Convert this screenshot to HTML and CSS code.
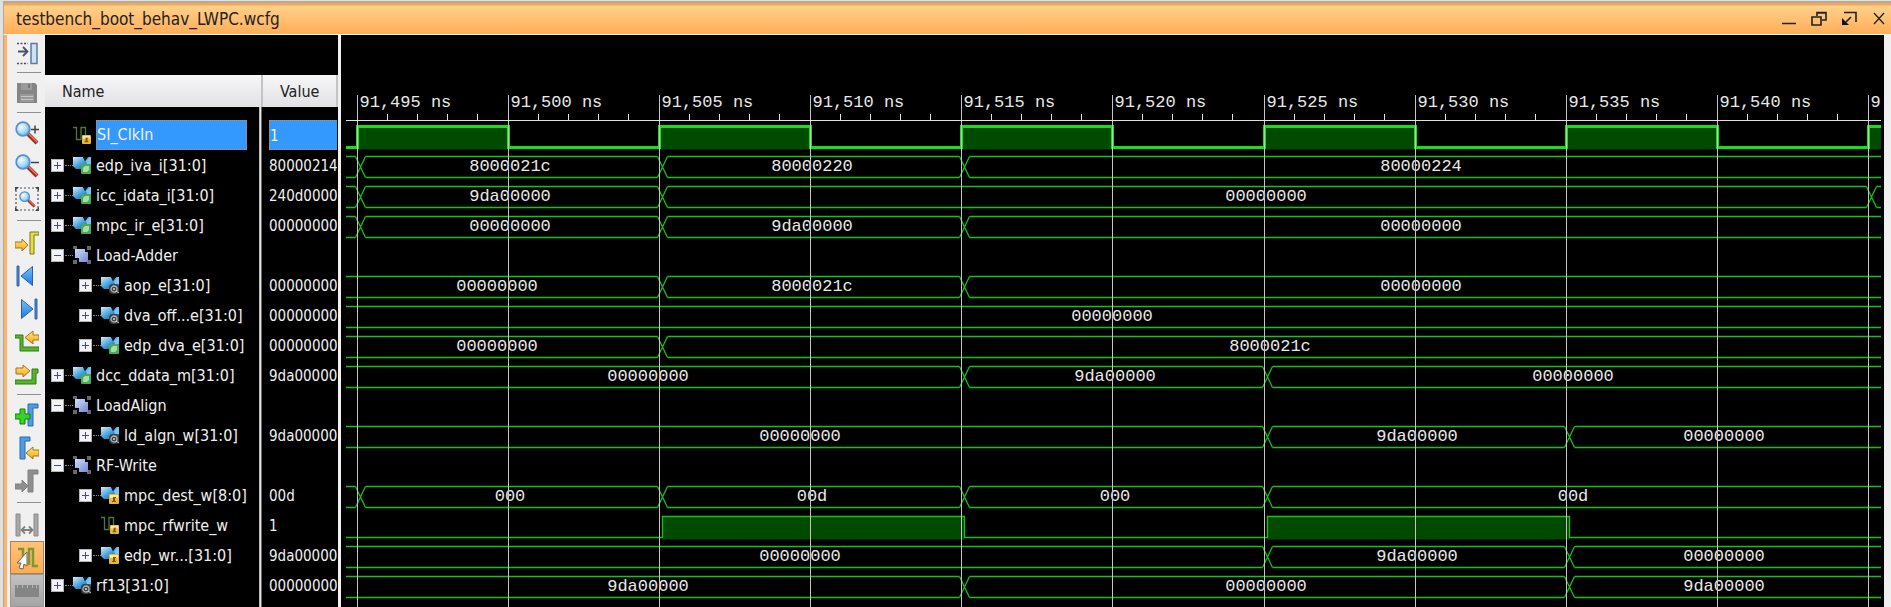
FILE: index.html
```html
<!DOCTYPE html>
<html lang="en">
<head>
<meta charset="utf-8">
<title>testbench_boot_behav_LWPC.wcfg</title>
<link rel="stylesheet" href="styles.css">
</head>
<body>
<svg class="defs" aria-hidden="true">
  <defs>
    <linearGradient id="g-blue" x1="0" y1="0" x2="1" y2="1"><stop offset="0" stop-color="#d4efff"/><stop offset=".5" stop-color="#3fa0dc"/><stop offset="1" stop-color="#17517f"/></linearGradient>
    <linearGradient id="g-play" x1="0" y1="0" x2="0" y2="1"><stop offset="0" stop-color="#7cc0f8"/><stop offset="1" stop-color="#1a7ae0"/></linearGradient>
    <linearGradient id="g-gold" x1="0" y1="0" x2="0" y2="1"><stop offset="0" stop-color="#ffe680"/><stop offset="1" stop-color="#f0a818"/></linearGradient>
    <linearGradient id="g-group" x1="0" y1="0" x2="1" y2="1"><stop offset="0" stop-color="#d3dcfb"/><stop offset="1" stop-color="#7389d0"/></linearGradient>
    <radialGradient id="g-lens" cx=".35" cy=".35" r=".7"><stop offset="0" stop-color="#f4fcff"/><stop offset=".6" stop-color="#a6dcfa"/><stop offset="1" stop-color="#5db2ee"/></radialGradient>
    <symbol id="bus" viewBox="0 0 18 18"><path d="M0 1h10l2 4 3-4h3v10l-3 2H3L0 10z" fill="url(#g-blue)"/><path d="M10 1l2 4 3-4z" fill="#0a1420"/><path d="M13 5l4-4h1v7h-4z" fill="#7cc4ee"/></symbol>
    <symbol id="b-port" viewBox="0 0 10 10"><rect x="0" y="0" width="10" height="10" rx="1" fill="#4ea858"/><path d="M2 8V4l2-2h4v4L6 8z" fill="#a4e0a0"/></symbol>
    <symbol id="b-reg" viewBox="0 0 10 10"><rect width="10" height="10" rx="4" fill="#3c3c3c"/><circle cx="5" cy="5" r="3" fill="none" stroke="#b4b4b4" stroke-width="1.3"/><circle cx="5" cy="5" r="1" fill="#e0e0e0"/><path d="M7 7l3 2" stroke="#ccc"/></symbol>
    <symbol id="b-lock" viewBox="0 0 10 10"><rect width="10" height="10" rx="1" fill="#e8b83c"/><path d="M1 1h8v3H1z" fill="#ffe9a0"/><path d="M4 3h3v1H6v3h1v1H3V7h1z" fill="#7a5200"/></symbol>
    <symbol id="i-port" viewBox="0 0 18 18"><use href="#bus" width="18" height="18"/><use href="#b-port" x="8" y="8" width="10" height="10"/></symbol>
    <symbol id="i-reg" viewBox="0 0 18 18"><use href="#bus" width="18" height="18"/><use href="#b-reg" x="8" y="8" width="10" height="10"/></symbol>
    <symbol id="i-lock" viewBox="0 0 18 18"><use href="#bus" width="18" height="18"/><use href="#b-lock" x="8" y="8" width="10" height="10"/></symbol>
    <symbol id="i-bit" viewBox="0 0 18 18"><path d="M0 1.500h3.500v12H8v-12h4.500V10" fill="none" stroke="#4c7a3c" stroke-width="1.300"/><use href="#b-lock" x="9" y="9" width="9" height="9"/></symbol>
    <symbol id="i-group" viewBox="0 0 18 18"><path d="M0 0h4v3H0zM14 0h4v4h-4zM0 14h4v4H0zM14 14h4v4h-4z" fill="#686868"/><path d="M2 3h10v3h3v10H6v-4H2z" fill="url(#g-group)"/><path d="M6.500 12V6.500H12" fill="none" stroke="#b4c2f0"/></symbol>
    <symbol id="lens" viewBox="0 0 24 24"><path d="M13 13l9 9" stroke="#a82a1c" stroke-width="4"/><path d="M14 13l8 8" stroke="#ea7a60" stroke-width="1.500"/><circle cx="8" cy="8" r="6.800" fill="url(#g-lens)" stroke="#5a8fd0" stroke-width="1.800"/></symbol>
  </defs>
</svg>

<main class="window">
  <header class="titlebar">
    <h1 class="title">testbench_boot_behav_LWPC.wcfg</h1>
    <div class="controls">
      <button type="button" aria-label="Minimize"><svg viewBox="0 0 16 16"><path d="M1 12.500h14" stroke-width="1.500"/></svg></button>
      <button type="button" aria-label="Restore"><svg viewBox="0 0 16 16"><path d="M6 5V1.500h9V9h-4M1 6h9v8H1zM6 2h9"/></svg></button>
      <button type="button" aria-label="Float"><svg viewBox="0 0 16 16"><path d="M3 1.500h12V11M10 6l-5 5"/><path d="M1 7v7h7z" class="solid"/></svg></button>
      <button type="button" aria-label="Close"><svg viewBox="0 0 16 16"><path d="M3 2l10 11M13 2L3 13" stroke-width="1.300"/></svg></button>
    </div>
  </header>

  <div class="body">
    <nav class="toolbar" aria-label="Waveform tools">
      <button type="button" aria-label="Hide panel"><svg viewBox="0 0 24 24"><path d="M2 2.500h11M2 22.500h11" stroke="#444e60" stroke-width="1.500" stroke-dasharray="2 1.500"/><path d="M3 10.500h9M8 6l4.500 4.500L8 15" fill="none" stroke="#4a5268" stroke-width="1.800"/><path d="M16 2.500h6v20h-6z" fill="#cfe2f4" stroke="#5f7ba4" stroke-width="1.500"/></svg></button>
      <hr>
      <button type="button" aria-label="Save"><svg viewBox="0 0 24 24"><path d="M2 2h18l2 2v18H2z" fill="#858585"/><path d="M6 2h11v7H6z" fill="#9b9b9b"/><path d="M13 3h2v4h-2z" fill="#777"/><path d="M5 13h14v8H5z" fill="#999"/><path d="M6 15.500h12M6 18.500h12" stroke="#c4c4c4"/></svg></button>
      <hr>
      <button type="button" aria-label="Zoom in"><svg viewBox="0 0 24 24"><use href="#lens" width="24" height="24"/><path d="M16 8.500h8M20 4.500v8" stroke="#444" stroke-width="1.500"/></svg></button>
      <button type="button" aria-label="Zoom out"><svg viewBox="0 0 24 24"><use href="#lens" width="24" height="24"/><path d="M16 8.500h8" stroke="#444" stroke-width="1.500"/></svg></button>
      <button type="button" aria-label="Zoom fit"><svg viewBox="0 0 24 24"><path d="M1 1h22v22H1z" fill="none" stroke="#555" stroke-width="1.200" stroke-dasharray="2 2"/><path d="M0 0h4L0 4zM24 0v4l-4-4zM0 24v-4l4 4zM24 24h-4l4-4z" fill="#444"/><use href="#lens" x="4" y="4" width="17" height="17"/></svg></button>
      <hr class="wide">
      <button type="button" aria-label="Go to cursor"><svg viewBox="0 0 24 24"><path d="M15 23V1h9v3h-5v19z" fill="#e4e040" stroke="#77741c"/><path d="M0 11h7V8l6 6-6 6v-3H0z" fill="url(#g-gold)" stroke="#a87414"/></svg></button>
      <button type="button" aria-label="Go to start"><svg viewBox="0 0 24 24"><path d="M2 2h2v20H2z" fill="#4a84c8" stroke="#3266aa"/><path d="M17.500 2.500v19L6 12z" fill="url(#g-play)" stroke="#2860ac"/></svg></button>
      <button type="button" aria-label="Go to end"><svg viewBox="0 0 24 24"><path d="M20 2h2v20h-2z" fill="#4a84c8" stroke="#3266aa"/><path d="M6.500 2.500v19L18 12z" fill="url(#g-play)" stroke="#2860ac"/></svg></button>
      <button type="button" aria-label="Previous transition"><svg viewBox="0 0 24 24"><path d="M0 5h8v12h16v4H5V8H0z" fill="#58b42c" stroke="#2f7d14"/><path d="M24 5h-6V1l-8 6.500 8 6.500v-4h6z" fill="url(#g-gold)" stroke="#a87414"/></svg></button>
      <button type="button" aria-label="Next transition"><svg viewBox="0 0 24 24"><path d="M0 17h17V6h6v4h-2v11H0z" fill="#58b42c" stroke="#2f7d14"/><path d="M1 5h7V2l7 6-7 6v-3H1z" fill="url(#g-gold)" stroke="#a87414"/></svg></button>
      <hr>
      <button type="button" aria-label="Add marker"><svg viewBox="0 0 24 24"><path d="M13 23V1h10v4h-5v18z" fill="#4c9ce8" stroke="#2c68ac"/><path d="M0 11h5V6h5v5h5v5h-5v5H5v-5H0z" fill="#35d427" stroke="#12800c"/></svg></button>
      <button type="button" aria-label="Previous marker"><svg viewBox="0 0 24 24"><path d="M5 23V1h10v4h-5v18z" fill="#4c9ce8" stroke="#2c68ac"/><path d="M24 14h-6v-3l-7 6 7 6v-3h6z" fill="url(#g-gold)" stroke="#a87414"/></svg></button>
      <button type="button" aria-label="Next marker"><svg viewBox="0 0 24 24"><path d="M13 23V1h10v4h-5v18zM0 15h7v-4l6 6-6 6v-3H0z" fill="#8e8e8e" stroke="#808080"/></svg></button>
      <hr class="wide">
      <button type="button" aria-label="Swap cursors"><svg viewBox="0 0 24 24"><path d="M1 1h4v22H1zM19 1h4v22h-4z" fill="#a8a8a8" stroke="#8a8a8a"/><path d="M7 17h10M10 13.500L6.500 17l3.500 3.500M14 13.500l3.500 3.500-3.500 3.500" fill="none" stroke="#808080" stroke-width="1.800"/></svg></button>
      <button type="button" class="active" aria-pressed="true" aria-label="Snap to transition"><svg viewBox="0 0 24 24"><path d="M3 3h5v17M14 19V3h4v17h5" fill="none" stroke="#7d9830" stroke-width="2.500"/><path d="M12 6v14l-3-2-1 5-4-1 2-5H2z" fill="#fff" stroke="#666"/></svg></button>
      <button type="button" class="muted" aria-label="Floating ruler"><svg viewBox="0 0 24 24"><path d="M0 6h24v12H0z" fill="#858585"/><path d="M2.500 6v3M7.500 6v3M12.500 6v3M17.500 6v3M21.500 6v3" stroke="#b4b4b4"/></svg></button>
    </nav>

    <section class="signals">
      <div class="sheet">
        <table>
          <colgroup><col class="c-name"><col class="c-value"></colgroup>
          <thead><tr><th scope="col">Name</th><th scope="col">Value</th></tr></thead>
          <tbody>
            <tr class="selected"><td><div class="node leaf"><svg><use href="#i-bit"/></svg><span>SI_ClkIn</span></div></td><td><div class="val">1</div></td></tr>
            <tr><td><div class="node"><button type="button" class="exp" aria-label="Expand"></button><svg><use href="#i-port"/></svg><span>edp_iva_i[31:0]</span></div></td><td><div class="val">80000214</div></td></tr>
            <tr><td><div class="node"><button type="button" class="exp" aria-label="Expand"></button><svg><use href="#i-port"/></svg><span>icc_idata_i[31:0]</span></div></td><td><div class="val">240d0000</div></td></tr>
            <tr><td><div class="node"><button type="button" class="exp" aria-label="Expand"></button><svg><use href="#i-port"/></svg><span>mpc_ir_e[31:0]</span></div></td><td><div class="val">00000000</div></td></tr>
            <tr><td><div class="node"><button type="button" class="exp open" aria-label="Collapse"></button><svg><use href="#i-group"/></svg><span>Load-Adder</span></div></td><td></td></tr>
            <tr><td><div class="node child"><button type="button" class="exp" aria-label="Expand"></button><svg><use href="#i-reg"/></svg><span>aop_e[31:0]</span></div></td><td><div class="val">00000000</div></td></tr>
            <tr><td><div class="node child"><button type="button" class="exp" aria-label="Expand"></button><svg><use href="#i-reg"/></svg><span>dva_off...e[31:0]</span></div></td><td><div class="val">00000000</div></td></tr>
            <tr><td><div class="node child"><button type="button" class="exp" aria-label="Expand"></button><svg><use href="#i-port"/></svg><span>edp_dva_e[31:0]</span></div></td><td><div class="val">00000000</div></td></tr>
            <tr><td><div class="node"><button type="button" class="exp" aria-label="Expand"></button><svg><use href="#i-port"/></svg><span>dcc_ddata_m[31:0]</span></div></td><td><div class="val">9da00000</div></td></tr>
            <tr><td><div class="node"><button type="button" class="exp open" aria-label="Collapse"></button><svg><use href="#i-group"/></svg><span>LoadAlign</span></div></td><td></td></tr>
            <tr><td><div class="node child"><button type="button" class="exp" aria-label="Expand"></button><svg><use href="#i-reg"/></svg><span>ld_algn_w[31:0]</span></div></td><td><div class="val">9da00000</div></td></tr>
            <tr><td><div class="node"><button type="button" class="exp open" aria-label="Collapse"></button><svg><use href="#i-group"/></svg><span>RF-Write</span></div></td><td></td></tr>
            <tr><td><div class="node child"><button type="button" class="exp" aria-label="Expand"></button><svg><use href="#i-lock"/></svg><span>mpc_dest_w[8:0]</span></div></td><td><div class="val">00d</div></td></tr>
            <tr><td><div class="node child leaf"><svg><use href="#i-bit"/></svg><span>mpc_rfwrite_w</span></div></td><td><div class="val">1</div></td></tr>
            <tr><td><div class="node child"><button type="button" class="exp" aria-label="Expand"></button><svg><use href="#i-lock"/></svg><span>edp_wr...[31:0]</span></div></td><td><div class="val">9da00000</div></td></tr>
            <tr><td><div class="node"><button type="button" class="exp" aria-label="Expand"></button><svg><use href="#i-reg"/></svg><span>rf13[31:0]</span></div></td><td><div class="val">00000000</div></td></tr>
          </tbody>
        </table>
      </div>
    </section>

    <section class="waves" aria-label="Waveforms"><svg id="plot"></svg></section>
    <div class="gutter"></div>
  </div>
</main>
<script src="waves.js"></script>
</body>
</html>
```

FILE: styles.css
```css
* { box-sizing: border-box; }

body {
  margin: 0;
  height: 100vh;
  overflow: hidden;
  background: #e0e0e0;
  font-family: "DejaVu Sans Condensed", "Noto Sans", sans-serif;
  font-size: 16px;
  color: #222;
}

button {
  padding: 0;
  border: 0;
  background: none;
  display: grid;
  place-items: center;
}

.defs { position: absolute; width: 0; height: 0; }

.window {
  height: 100%;
  display: flex;
  flex-direction: column;
  padding: 1px 0 0 3px;
}

.titlebar {
  display: flex;
  justify-content: space-between;
  align-items: center;
  flex: none;
  height: 34px;
  padding-left: 12px;
  border-top: 2px solid #b0aaa2;
  border-left: 1px solid #b0aaa2;
  border-bottom: 1px solid #fff4e4;
  background: linear-gradient(#f4a850 0 2px, #ffd08a 3px, #ffae58);
}

.title { margin: 0; font-size: 17px; font-weight: normal; }

.controls { display: flex; gap: 6px; }
.controls button { width: 24px; height: 24px; }
.controls svg { width: 16px; height: 16px; fill: none; stroke: #222; stroke-width: 1.6; }
.controls .solid { fill: #111; stroke: none; }

.body { flex: 1; min-height: 0; display: flex; border-left: 1px solid #b0aaa2; }

.toolbar {
  flex: none;
  width: 41px;
  display: flex;
  flex-direction: column;
  padding: 1px 1px 0 3px;
  border-left: 3px solid #fdb568;
  background: #f0f0f0;
}
.toolbar button { flex: none; width: 34px; height: 33px; }
.toolbar button svg { width: 24px; height: 24px; }
.toolbar hr {
  flex: none;
  width: 24px;
  height: 1px;
  margin: 3px 0 3px 7px;
  border: 0;
  background: #909090;
}
.toolbar hr.wide { margin-top: 5px; margin-bottom: 5px; }
.toolbar .active { border: 1px solid #a08460; background: linear-gradient(#ffc27a, #ffac50); }
.toolbar .muted { border: 1px solid #999; background: linear-gradient(#c2c2c2, #a4a4a4); }

.signals {
  flex: none;
  width: 293px;
  padding-top: 40px;
  overflow: hidden;
  background: #000;
}
.sheet {
  height: 100%;
  background: linear-gradient(90deg, #000 214px, #8a8a8a 214px, #e8e8e8 215px, #e8e8e8 216px, #666 216px, #666 217px, #000 217px);
}
table { width: 100%; table-layout: fixed; border-collapse: collapse; }
.c-name { width: 217px; }
th {
  height: 32px;
  padding: 0 0 0 17px;
  border-right: 2px solid #c4c4c8;
  background: linear-gradient(#f6f6f7, #e2e2e6);
  font-weight: normal;
  text-align: left;
}
tbody::before { content: ""; display: block; height: 13px; }
td { height: 30px; padding: 0; overflow: hidden; color: #f0f0f0; white-space: nowrap; }

.node { display: flex; align-items: center; height: 30px; padding-left: 6px; }
.node.child { padding-left: 34px; }
.node.leaf::before { content: ""; width: 22px; }
.node svg { flex: none; width: 18px; height: 18px; }
.node span { margin-left: 5px; }

.exp {
  flex: none;
  width: 13px;
  height: 13px;
  margin-right: 9px;
  border: 1px solid #b4b4b4;
  background:
    linear-gradient(#3c4c9c, #3c4c9c) center / 7px 1px no-repeat,
    linear-gradient(#3c4c9c, #3c4c9c) center / 1px 7px no-repeat,
    #f4f4f4;
  position: relative;
}
.exp.open { background: linear-gradient(#3c4c9c, #3c4c9c) center / 7px 1px no-repeat, #f4f4f4; }
.exp::after {
  content: "";
  position: absolute;
  left: 13px;
  top: 5px;
  width: 8px;
  border-top: 1px dotted #888;
}

.val { height: 30px; margin-left: 7px; font-size: 15px; line-height: 32px; }
.selected .node span {
  flex: 1;
  height: 30px;
  margin-right: 15px;
  border: 1px dotted #c98a4a;
  background: #3399ff;
  line-height: 28px;
}
.selected .val { border: 1px dotted #c98a4a; border-right: 0; background: #3399ff; line-height: 30px; }

.waves {
  flex: 1;
  min-width: 0;
  padding-left: 5px;
  padding-right: 3px;
  border-left: 3px solid #f0f0f0;
  background: #000;
}
#plot { display: block; width: 100%; height: 100%; overflow: visible; }
#plot text { font-family: "Liberation Mono", monospace; font-size: 17px; fill: #e8e8e8; }
#plot .centered { text-anchor: middle; }
.grid { stroke: #c4c4c4; stroke-width: 1; }
.axis { stroke: #e0e0e0; stroke-width: 1; }
.trace { fill: none; stroke: #18c018; stroke-width: 1.3; }
.clock { fill: none; stroke: #18e018; stroke-width: 3; }
.high { fill: #004b00; }

.gutter { flex: none; width: 7px; background: #f0f0f0; }
```

FILE: waves.js
```js
const START = 91495;
const LEAD = 11;
const VIEW = 1534;
const STEP = 151.1;
const ROW = 30;
const TOP = 86;
const END = 11;

/* Each bus is a list of [division where the value begins, value]; -1 lies left of the view. */
const rows = [
  { clock: true },
  { bus: [[-1, ""], [0, "8000021c"], [2, "80000220"], [4, "80000224"]] },
  { bus: [[-1, ""], [0, "9da00000"], [2, "00000000"], [10, ""]] },
  { bus: [[-1, ""], [0, "00000000"], [2, "9da00000"], [4, "00000000"]] },
  {},
  { bus: [[-1, "00000000"], [2, "8000021c"], [4, "00000000"]] },
  { bus: [[-1, "00000000"]] },
  { bus: [[-1, "00000000"], [2, "8000021c"]] },
  { bus: [[-1, "00000000"], [4, "9da00000"], [6, "00000000"]] },
  {},
  { bus: [[-1, "00000000"], [6, "9da00000"], [8, "00000000"]] },
  {},
  { bus: [[-1, ""], [0, "000"], [2, "00d"], [4, "000"], [6, "00d"]] },
  { bit: [[2, 4], [6, 8]] },
  { bus: [[-1, "00000000"], [6, "9da00000"], [8, "00000000"]] },
  { bus: [[-1, "9da00000"], [4, "00000000"], [8, "9da00000"]] },
];

function draw() {
  const svg = document.getElementById("plot");
  const width = svg.clientWidth;
  const height = svg.clientHeight;
  const scale = width / VIEW;
  const gx = (k) => Math.floor((LEAD + k * STEP) * scale) + 0.5;
  let out = "";

  rows.forEach((row, i) => {
    const hi = TOP + i * ROW + 5.5;
    const lo = hi + 21;
    if (row.clock) {
      let path = `M0 ${lo}`;
      for (let k = 0; k <= 10; k += 2) {
        const a = gx(k);
        const b = k === 10 ? width : gx(k + 1);
        out += `<rect class="high" x="${a}" y="${hi}" width="${b - a}" height="23"/>`;
        path += `H${a}V${hi}H${b}` + (k === 10 ? "" : `V${lo}`);
      }
      out += `<path class="clock" d="${path}"/>`;
    }
    if (row.bit) {
      let path = `M0 ${lo}`;
      row.bit.forEach(([s, e]) => {
        const a = gx(s) + 3;
        const b = gx(e) + 3;
        out += `<rect class="high" x="${a}" y="${hi}" width="${b - a}" height="23"/>`;
        path += `H${a}V${hi}H${b}V${lo}`;
      });
      out += `<path class="trace" d="${path}H${width}"/>`;
    }
    if (row.bus) {
      row.bus.forEach(([k, label], n) => {
        const next = row.bus[n + 1];
        const a = k < 0 ? 0 : gx(k) + 8;
        const b = next ? gx(next[0]) - 2 : width;
        out += `<path class="trace" d="M${a} ${hi}H${b}M${a} ${lo}H${b}"/>`;
        if (next) out += `<path class="trace" d="M${b} ${hi}L${b + 10} ${lo}M${b} ${lo}L${b + 10} ${hi}"/>`;
        const from = k < 0 ? (next ? -END : 0) : gx(k) + 3;
        const to = next ? gx(next[0]) + 3 : width;
        if (label) out += `<text class="centered" x="${Math.floor((from + to) / 2) - 1}" y="${hi + 14.5}">${label}</text>`;
      });
    }
  });

  for (let k = 0; k <= 10; k++) {
    const x = gx(k);
    out += `<path class="grid" d="M${x} 60V${height}"/>`;
    const label = k === 10 ? "9." : (START + 5 * k).toLocaleString("en-US") + " ns";
    out += `<text x="${x + 2}" y="72">${label}</text>`;
    for (let m = 1; m < 5; m++) {
      const t = Math.floor(x + m * 30 * scale) + 0.5;
      if (t < width) out += `<path class="axis" d="M${t} 79V85"/>`;
    }
  }
  out += `<path class="axis" d="M0 85.5H${width}"/>`;
  svg.innerHTML = out;
}

draw();
addEventListener("resize", draw);
```
